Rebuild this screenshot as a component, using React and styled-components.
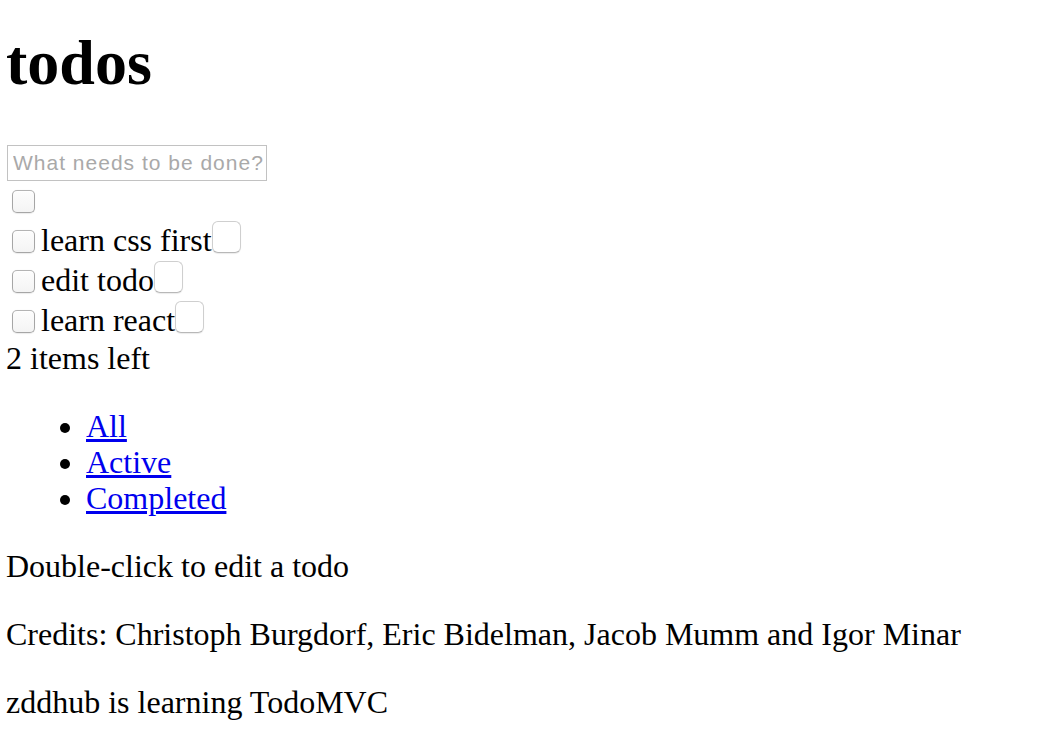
import React from "react";
import styled, { createGlobalStyle } from "styled-components";

const Global = createGlobalStyle`
  html, body { margin: 0; padding: 0; background: #fff; }
  body {
    font-family: "Liberation Serif", "Times New Roman", serif;
    font-size: 32px;
    line-height: 36px;
    color: #000;
  }
`;

const Page = styled.div`
  padding: 0 6px;
  display: flow-root;
`;

const Title = styled.h1`
  font-size: 64px;
  line-height: 74px;
  font-weight: bold;
  margin: 26px 0 45px;
  padding: 0;
`;

const NewTodo = styled.input`
  display: block;
  box-sizing: border-box;
  width: 260px;
  height: 36px;
  margin: 0 0 0 1px;
  padding: 0 3px 0 5px;
  border: 1px solid #c2c2c2;
  border-radius: 0;
  outline: none;
  font-family: "Liberation Sans", Arial, sans-serif;
  font-size: 21px;
  letter-spacing: 1px;
  color: #000;
  &::placeholder { color: #a9a9a9; }
`;

const Row = styled.div`
  display: flex;
  align-items: flex-end;
  height: ${(p) => p.$h || 40}px;
`;

const Check = styled.input.attrs({ type: "checkbox" })`
  appearance: none;
  -webkit-appearance: none;
  box-sizing: border-box;
  flex: none;
  width: 23px;
  height: 23px;
  margin: 0 6px 7px 6px;
  border: 1px solid #a6a6a6;
  border-top-color: #b4b4b4;
  border-radius: 5px;
  background: linear-gradient(#fdfdfd, #f4f4f4);
  box-shadow: inset 0 1px 0 rgba(255,255,255,0.8), 0 0.5px 1px rgba(0,0,0,0.08);
`;

const Label = styled.label`
  display: block;
  line-height: 36px;
  margin-bottom: 2px;
  white-space: nowrap;
`;

const Destroy = styled.button`
  box-sizing: border-box;
  flex: none;
  width: 29px;
  height: 32px;
  margin: 0 0 7px 0;
  padding: 0;
  border: 1px solid #cfcfcf;
  border-bottom-color: #b8b8b8;
  border-radius: 6px;
  background: #fff;
  box-shadow: 0 1px 1px rgba(0,0,0,0.08);
`;

const Count = styled.span`
  display: block;
  line-height: 36px;
`;

const Filters = styled.ul`
  margin: 32px 0;
  padding: 0 0 0 80px;
  list-style: disc;
`;

const FilterItem = styled.li`
  line-height: 36px;
`;

const FilterLink = styled.a`
  color: #0000ee;
  text-decoration: underline;
`;

const Note = styled.p`
  margin: 32px 0;
  line-height: 36px;
`;

const todos = [
  { title: "learn css first" },
  { title: "edit todo" },
  { title: "learn react" },
];

export default function App() {
  return (
    <Page>
      <Global />
      <Title>todos</Title>
      <NewTodo placeholder="What needs to be done?" />
      <Row $h={39}>
        <Check />
      </Row>
      {todos.map((t) => (
        <Row key={t.title}>
          <Check />
          <Label>{t.title}</Label>
          <Destroy />
        </Row>
      ))}
      <Count>2 items left</Count>
      <Filters>
        <FilterItem><FilterLink href="#/">All</FilterLink></FilterItem>
        <FilterItem><FilterLink href="#/active">Active</FilterLink></FilterItem>
        <FilterItem><FilterLink href="#/completed">Completed</FilterLink></FilterItem>
      </Filters>
      <Note>Double-click to edit a todo</Note>
      <Note>Credits: Christoph Burgdorf, Eric Bidelman, Jacob Mumm and Igor Minar</Note>
      <Note>zddhub is learning TodoMVC</Note>
    </Page>
  );
}
